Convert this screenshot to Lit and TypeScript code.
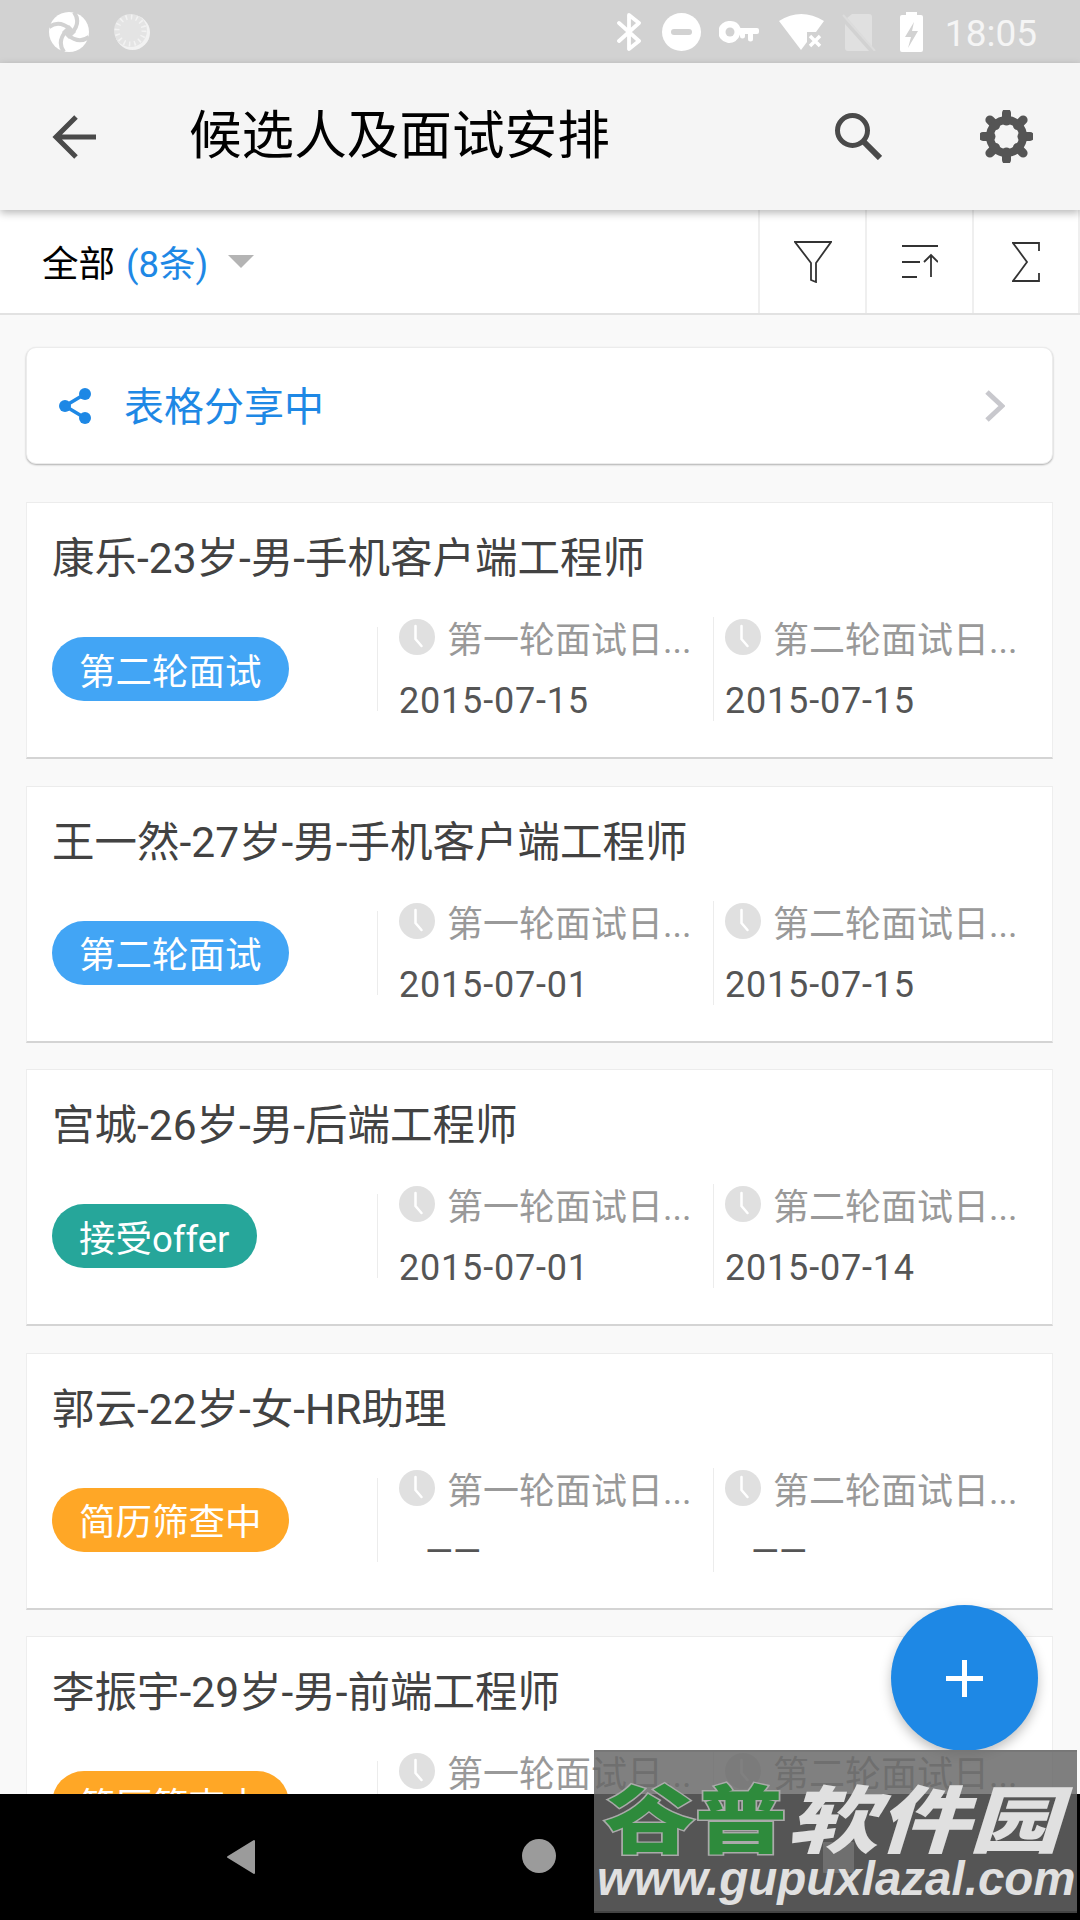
import { LitElement, html, css, svg } from "lit";
import { customElement } from "lit/decorators.js";

const clock = html`<svg class="clock" viewBox="0 0 36 36"><circle cx="18" cy="18" r="18" fill="#e0e0e0"/><path d="M16.500 7v13l6 7" fill="none" stroke="#fff" stroke-width="2.500" stroke-linecap="round"/></svg>`;

const rot4 = [0, 90, 180, 270];
const rot8 = [0, 45, 90, 135, 180, 225, 270, 315];

type C = { name: string; tag: string; color: string; d1: string; d2: string };
const cards: C[] = [
  { name: "康乐-23岁-男-手机客户端工程师", tag: "第二轮面试", color: "#42a5f5", d1: "2015-07-15", d2: "2015-07-15" },
  { name: "王一然-27岁-男-手机客户端工程师", tag: "第二轮面试", color: "#42a5f5", d1: "2015-07-01", d2: "2015-07-15" },
  { name: "宫城-26岁-男-后端工程师", tag: "接受offer", color: "#26a69a", d1: "2015-07-01", d2: "2015-07-14" },
  { name: "郭云-22岁-女-HR助理", tag: "简历筛查中", color: "#ffa726", d1: "", d2: "" },
  { name: "李振宇-29岁-男-前端工程师", tag: "简历筛查中", color: "#ffa726", d1: "", d2: "" },
];

@customElement("app-root")
export class AppRoot extends LitElement {
  static styles = css`
    :host { display: block; width: 1080px; height: 1920px; overflow: hidden; position: relative; background: #f9f9f9;
      font-family: Roboto, "Noto Sans CJK SC", sans-serif; }
    .status { height: 63px; background: #d2d2d2; display: flex; align-items: center; padding: 0 43px 0 49px; color: #fff; }
    .status .left { display: flex; gap: 25px; align-items: center; flex: 1; }
    .status .right { display: flex; align-items: center; }
    .i1 { margin-left: 21px; } .i2 { margin-left: 18px; } .i3 { margin-left: 20px; } .i4 { margin-left: 18px; } .i5 { margin-left: 24px; }
    .time { font-size: 37px; margin-left: 22px; margin-top: 3px; color: #f5f5f5; }
    .appbar { height: 147px; background: #f5f5f5; display: flex; align-items: center; position: relative; z-index: 2;
      box-shadow: 0 3px 8px rgba(0,0,0,.28); padding-left: 52px; }
    .appbar h1 { margin: 0 0 0 93px; font-size: 52.600px; font-weight: 400; color: #000; flex: 1; line-height: 1; }
    .appbar .search { margin-right: 98px; }
    .appbar .gear { margin-right: 47px; }
    .filter { height: 103px; background: #fff; border-bottom: 2px solid #e2e2e2; display: flex; align-items: stretch; }
    .filter .all { flex: 1; display: flex; align-items: center; padding-left: 42px; font-size: 36.500px; color: #000; }
    .filter .all .n { color: #1e88e5; margin-left: 11px; }
    .tri { width: 0; height: 0; border-left: 13px solid transparent; border-right: 13px solid transparent; border-top: 13px solid #b4b4b4; margin-left: 20px; }
    .fbtn { width: 107px; display: flex; align-items: center; justify-content: center; border-left: 2px solid #efefef; box-sizing: border-box; flex: none; }
    .fbtn.last { width: 108px; border-right: 2px solid #efefef; }
    .list { padding: 32px 27px 0 26px; display: flex; flex-direction: column; }
    .share { height: 117px; box-sizing: border-box; background: #fff; border-radius: 10px; border: 1px solid #ececec; box-shadow: 0 1px 2px rgba(0,0,0,.3);
      display: flex; align-items: center; padding: 0 47px 0 32px; color: #1e88e5; font-size: 40px; margin-bottom: 38px; }
    .share span { flex: 1; margin-left: 33px; margin-bottom: 4px; }
    .card { height: 257px; flex: none; box-sizing: border-box; background: #fff; margin-bottom: 26.500px; border-left: 1px solid #eee; border-right: 1px solid #eee; border-top: 1px solid #ececec; border-bottom: 2px solid #d4d4d4;
      padding: 30px 0 0 25px; }
    .name { font-size: 42.500px; color: #424242; line-height: 52px; height: 52px; white-space: nowrap; }
    .row { display: flex; margin-top: 32px; height: 104px; }
    .tagcol { width: 325px; display: flex; align-items: center; flex: none; }
    .tag { height: 64px; padding: 0 27px; border-radius: 32px; color: #fff; font-size: 36.500px; display: flex; align-items: center; }
    .col { flex: none; display: flex; flex-direction: column; box-sizing: border-box; position: relative; padding-top: 2px; }
    .col::before { content: ""; position: absolute; left: 0; background: #ececec; width: 1px; }
    .col.a { width: 336px; padding-left: 22px; }
    .col.b { width: 326px; padding-left: 12px; }
    .col.a::before { top: 10px; bottom: 10px; }
    .col.b::before { top: 0; bottom: 0; }
    .lab { display: flex; align-items: center; height: 36px; color: #999; font-size: 36px; }
    .clock { width: 36px; height: 36px; flex: none; margin-right: 12px; }
    .date { font-size: 36px; color: #555; margin-top: 23px; line-height: 46px; letter-spacing: 0.800px; }
    .dash { font-size: 36px; color: #555; margin-top: 23px; line-height: 46px; padding-left: 26px; }
    .nav { position: absolute; left: 0; right: 0; bottom: 0; height: 126px; background: #000; z-index: 3; }
    .fab { position: absolute; left: 891px; top: 1605px; width: 147px; height: 146px; border-radius: 50%; background: #1e88e5; z-index: 4;
      box-shadow: 0 5px 12px rgba(0,0,0,.25); display: flex; align-items: center; justify-content: center; }
    .tri-nav { position: absolute; left: 226px; top: 1839px; z-index: 4; }
    .circ { position: absolute; left: 522px; top: 1839px; width: 34px; height: 34px; border-radius: 50%; background: #9b9b9b; z-index: 4; }
    .sq { position: absolute; left: 823px; top: 1842px; width: 31px; height: 31px; background: #9b9b9b; z-index: 4; border-radius: 1px; }
    .wm { position: absolute; left: 594px; top: 1750px; width: 483px; height: 163px; box-sizing: border-box; background: rgba(102,102,102,.83);
      z-index: 5; overflow: hidden; border-top: 2px solid #777; border-bottom: 2px solid #444; }
    .wm .cn { font-family: "Noto Sans CJK SC", sans-serif; font-size: 78px; font-weight: 900; line-height: 90px; height: 90px; margin-top: 18px; white-space: nowrap; color: #e0e0e0;
      transform: scale(1.170, 0.940); transform-origin: 10px 50%; padding-left: 10px; }
    .wm .cn b { color: #2e8b3c; font-weight: 900; paint-order: stroke fill; -webkit-text-stroke: 3px #aaa; }
    .wm .cn i { font-style: italic; }
    .wm .en { font-family: "Liberation Sans", sans-serif; font-size: 47.500px; font-weight: 700; line-height: 50px; color: #e0e0e0; font-style: italic; white-space: nowrap; margin-top: -6px; padding-left: 3px; }
  `;

  renderCard(c: C) {
    return html`<div class="card">
      <div class="name">${c.name}</div>
      <div class="row">
        <div class="tagcol"><div class="tag" style="background:${c.color}">${c.tag}</div></div>
        <div class="col a">
          <div class="lab">${clock}第一轮面试日...</div>
          ${c.d1 ? html`<div class="date">${c.d1}</div>` : html`<div class="dash">——</div>`}
        </div>
        <div class="col b">
          <div class="lab">${clock}第二轮面试日...</div>
          ${c.d2 ? html`<div class="date">${c.d2}</div>` : html`<div class="dash">——</div>`}
        </div>
      </div>
    </div>`;
  }

  render() {
    return html`
      <div class="status">
        <div class="left">
          <svg width="40" height="40" viewBox="0 0 40 40"><circle cx="20" cy="20" r="20" fill="#fff"/>
            ${rot4.map((r) => svg`<path transform="rotate(${r} 20 20)" d="M0 15C7 10 14 11 21 17" fill="none" stroke="#d2d2d2" stroke-width="4"/>`)}
            <path d="M20 13l7 7-7 7-7-7z" fill="#d2d2d2"/></svg>
          <svg width="36" height="36" viewBox="0 0 36 36"><circle cx="18.500" cy="18.500" r="17.500" fill="#f2f2f2"/><circle cx="16.500" cy="16.500" r="16.500" fill="#e4e4e4"/><circle cx="16.500" cy="16.500" r="13.500" fill="none" stroke="#f2f2f2" stroke-width="5" stroke-dasharray="1.500 3.800"/></svg>
        </div>
        <div class="right">
          <svg width="24" height="38" viewBox="0 0 24 38" fill="none" stroke="#fff" stroke-width="3.800" stroke-linejoin="round" stroke-linecap="round"><path d="M2 10l20 18-10 8V2l10 8L2 28"/></svg>
          <svg class="i1" width="39" height="38" viewBox="0 0 39 38"><ellipse cx="19.500" cy="19" rx="19.500" ry="19" fill="#fff"/><rect x="9" y="16" width="21" height="6" rx="3" fill="#d2d2d2"/></svg>
          <svg class="i2" width="40" height="22" viewBox="0 0 40 22"><path d="M11 0a11 11 0 0 1 10.500 7H38a2 2 0 0 1 2 2v2a2 2 0 0 1-2 2h-4v5a2.500 2.500 0 0 1-5 0v-5h-3v2a2.500 2.500 0 0 1-5 0v-1.500A11 11 0 1 1 11 0z" fill="#fff"/><circle cx="11" cy="11" r="4.500" fill="#d2d2d2"/></svg>
          <svg class="i3" width="45" height="36" viewBox="0 0 45 36"><path d="M0 7Q22-7 45 7L37 18H28V28L22 36z" fill="#fff"/><path d="M31 22l10 10m0-10L31 32" stroke="#fff" stroke-width="3.500"/></svg>
          <svg class="i4" width="34" height="38" viewBox="0 0 34 38"><path d="M10 1h17a3 3 0 0 1 3 3v30L5 5zM3 11l24 27H6a3 3 0 0 1-3-3z" fill="#e0e0e0"/><path d="M1 2l32 36" stroke="#dcdcdc" stroke-width="2"/></svg>
          <svg class="i5" width="23" height="40" viewBox="0 0 23 40"><path fill-rule="evenodd" d="M6 0h11v3h4a2 2 0 0 1 2 2v33a2 2 0 0 1-2 2H2a2 2 0 0 1-2-2V5a2 2 0 0 1 2-2h4zM14 10l-9 15h6l-3 11 10-17h-6z" fill="#fff"/></svg>
          <span class="time">18:05</span>
        </div>
      </div>
      <div class="appbar">
        <svg width="44" height="44" viewBox="0 0 44 44" fill="none" stroke="#4a4a4a" stroke-width="5"><path d="M44 22H4M24 2L4 22l20 20"/></svg>
        <h1>候选人及面试安排</h1>
        <svg class="search" width="47" height="47" viewBox="0 0 47 47" fill="none" stroke="#4a4a4a"><circle cx="17.500" cy="17.500" r="15" stroke-width="5"/><path d="M28 28l17 17" stroke-width="6"/></svg>
        <svg class="gear" width="53" height="53" viewBox="0 0 53 53">
          ${rot8.map((r) => svg`<path transform="rotate(${r} 26.500 26.500)" d="M26.500 3v8" stroke="#555" stroke-width="9" stroke-linecap="round"/>`)}
          <circle cx="26.500" cy="26.500" r="16.500" fill="none" stroke="#555" stroke-width="8"/>
        </svg>
      </div>
      <div class="filter">
        <div class="all">全部<span class="n">(8条)</span><i class="tri"></i></div>
        <div class="fbtn"><svg width="38" height="42" viewBox="0 0 38 42" fill="none" stroke="#333" stroke-width="1.800"><path d="M1 1h36L22 22v19l-5-2V22z"/></svg></div>
        <div class="fbtn"><svg width="36" height="34" viewBox="0 0 36 34" fill="none" stroke="#333" stroke-width="1.800"><path d="M0 1h36M0 17h18M0 32h15M29 32V10M22 17l7-7 7 7"/></svg></div>
        <div class="fbtn last"><svg width="28" height="40" viewBox="0 0 28 40" fill="none" stroke="#333" stroke-width="1.800"><path d="M27 9V1H1l14 19L1 39h26v-8"/></svg></div>
      </div>
      <div class="list">
        <div class="share">
          <svg width="32" height="36" viewBox="0 0 32 36" fill="#1e88e5"><circle cx="26" cy="6" r="6"/><circle cx="26" cy="30" r="6"/><circle cx="6" cy="18" r="6"/><path d="M26 6L6 18l20 12" fill="none" stroke="#1e88e5" stroke-width="3.500"/></svg>
          <span>表格分享中</span>
          <svg width="20" height="32" viewBox="0 0 20 32" fill="none" stroke="#c8c8cd" stroke-width="5"><path d="M2 2l15 14L2 30"/></svg>
        </div>
        ${cards.map((c) => this.renderCard(c))}
      </div>
      <div class="fab"><svg width="37" height="37" viewBox="0 0 37 37"><path d="M18.500 0v37M0 18.500h37" stroke="#fff" stroke-width="5"/></svg></div>
      <div class="nav"></div>
      <svg class="tri-nav" width="30" height="36" viewBox="0 0 30 36"><path d="M28 2v32L2 18z" fill="#9b9b9b" stroke="#9b9b9b" stroke-width="2" stroke-linejoin="round"/></svg>
      <div class="circ"></div>
      <div class="sq"></div>
      <div class="wm">
        <div class="cn"><b>谷普</b><i>软件园</i></div>
        <div class="en">www.gupuxlazal.com</div>
      </div>
    `;
  }
}
